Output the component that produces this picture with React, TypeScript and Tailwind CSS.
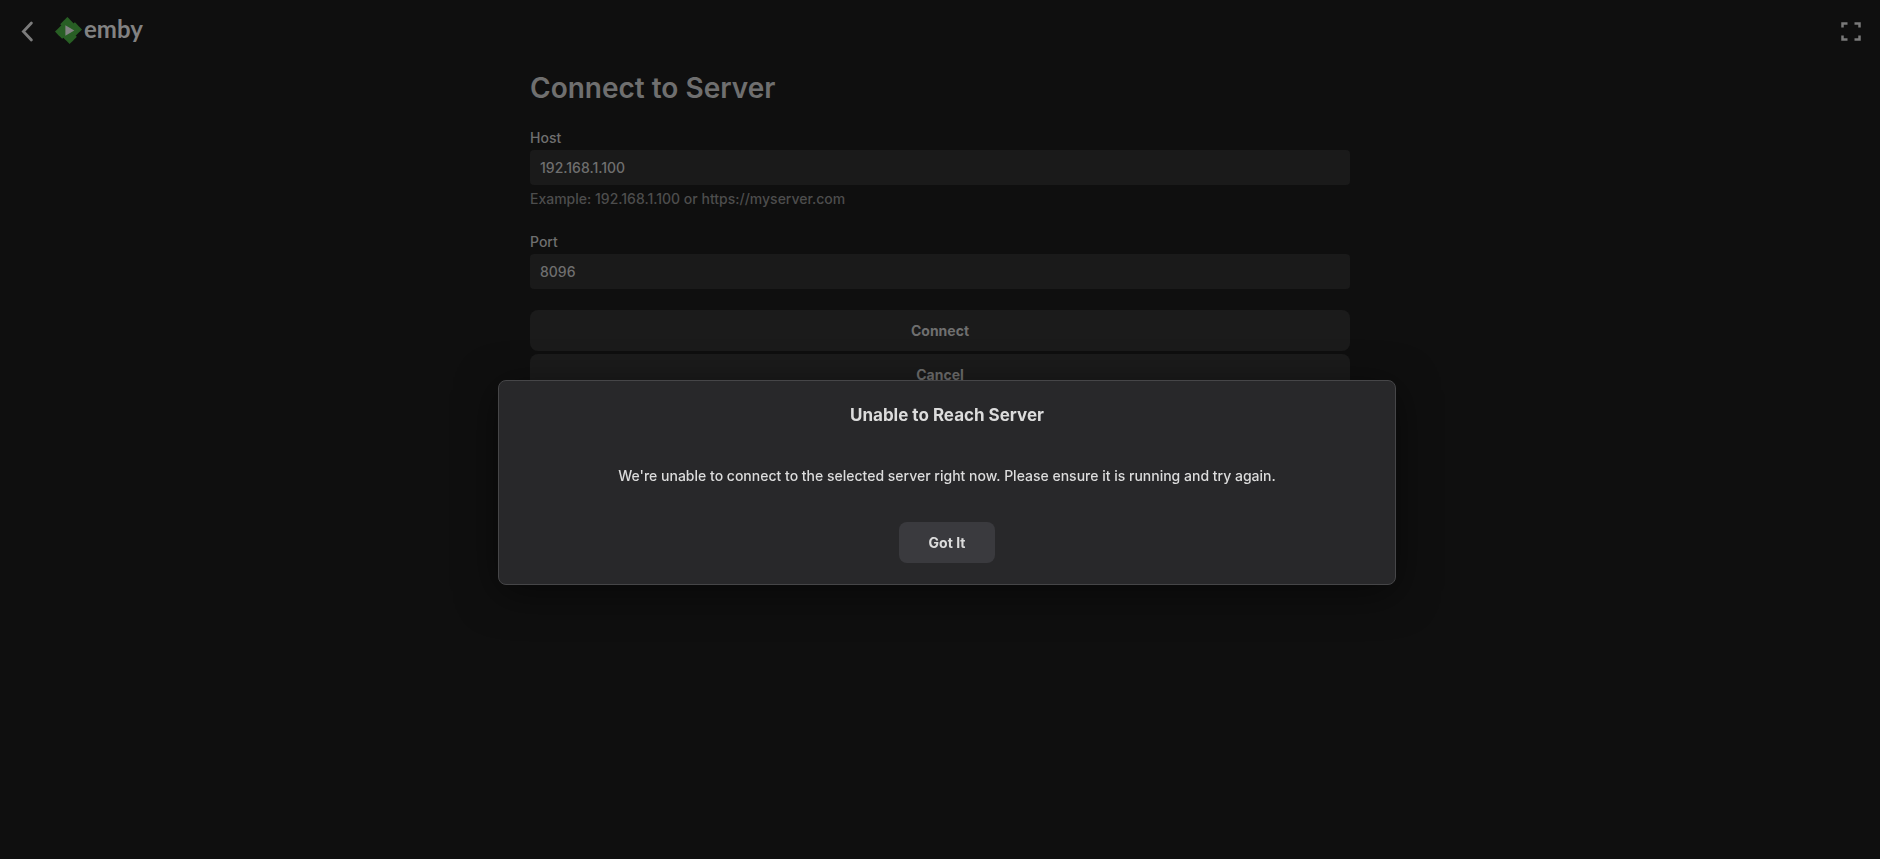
import { useState } from 'react';

function EmbyMark() {
  return (
    <svg viewBox="0 0 24 24" className="size-[27px] shrink-0" aria-hidden="true">
      <path
        fill="#285f24"
        d="M11.041 0c-.007 0-1.456 1.43-3.219 3.176L4.615 6.352l.512.513.512.512-2.819 2.791L0 12.961l1.83 1.848c1.006 1.016 2.438 2.46 3.182 3.209l1.351 1.359.508-.496c.28-.273.515-.498.524-.498.008 0 1.266 1.264 2.794 2.808L12.97 24l.187-.182c.23-.225 5.007-4.95 5.717-5.656l.52-.516-.502-.513c-.276-.282-.5-.52-.496-.53.003-.009 1.264-1.26 2.802-2.783 1.538-1.522 2.8-2.776 2.803-2.785.005-.012-3.617-3.684-6.107-6.193L17.65 4.6l-.505.505c-.279.278-.517.501-.53.497-.013-.005-1.27-1.267-2.793-2.805A449.655 449.655 0 0 0 11.041 0z"
      />
      <path fill="#838383" d="M9.2 7.367 17.18 12 9.2 16.621z" />
    </svg>
  );
}

function Header() {
  return (
    <header className="flex h-[61px] items-center justify-between px-4">
      <div className="flex items-center">
        <button type="button" aria-label="Back" className="flex h-10 w-[39px] items-center">
          <svg viewBox="0 0 24 24" className="size-6" fill="none" stroke="#7c7c7c" strokeWidth="2.8" strokeLinecap="round">
            <path d="M15.4 4 7.4 12.500l8 8.500" />
          </svg>
        </button>
        <a href="#" className="flex items-center gap-0.5">
          <EmbyMark />
          <span className="pb-1 font-['Lato',sans-serif] text-2xl leading-7 font-bold text-[#828282]">emby</span>
        </a>
      </div>
      <button type="button" aria-label="Fullscreen" className="flex h-10 items-center">
        <svg viewBox="0 0 24 24" className="size-6" fill="none" stroke="#7a7a7a" strokeWidth="2.5">
          <path d="M2.5 8.500V4.500H7.500M14.500 4.500H19.500V8.500M19.500 16.500v4H14.500M7.500 20.500H2.500V16.500" />
        </svg>
      </button>
    </header>
  );
}

export default function App() {
  const [host, setHost] = useState('192.168.1.100');
  const [port, setPort] = useState('8096');
  const [showError, setShowError] = useState(true);

  return (
    <div className="min-h-screen bg-[#0f0f0f] font-['Inter',sans-serif] text-sm leading-5 font-medium text-[#6f6f6f]">
      <Header />

      <main className="mx-auto w-full max-w-[820px]">
        <h1 className="mt-[9px] text-[28px] leading-9 font-semibold">Connect to Server</h1>

        <form className="mt-[22px]" onSubmit={(e) => e.preventDefault()}>
          <label htmlFor="host" className="block">Host</label>
          <input
            id="host"
            value={host}
            onChange={(e) => setHost(e.target.value)}
            className="mt-0.5 h-[35px] w-full rounded bg-[#1a1a1a] px-2.5 outline-none"
          />
          <p className="mt-1 text-[#4d4d4d]">Example: 192.168.1.100 or https://myserver.com</p>

          <label htmlFor="port" className="mt-[23px] block">Port</label>
          <input
            id="port"
            value={port}
            onChange={(e) => setPort(e.target.value)}
            className="mt-0.5 h-[35px] w-full rounded bg-[#1a1a1a] px-2.5 outline-none"
          />

          <div className="mt-[21px] flex flex-col gap-[3px]">
            <button type="submit" className="h-[41px] rounded-lg bg-[#1b1b1b] font-bold">Connect</button>
            <button type="button" className="h-[41px] rounded-lg bg-[#1b1b1b] font-bold">Cancel</button>
          </div>
        </form>
      </main>

      {showError && (
        <div className="fixed inset-0 flex justify-center pt-[380px] pl-3.5">
          <div
            role="alertdialog"
            aria-labelledby="error-title"
            aria-describedby="error-text"
            className="flex w-full max-w-[898px] flex-col items-center self-start rounded-lg border border-[#464648] bg-[#28282a] pt-[22px] pb-[21px] text-[#dcdcdc] shadow-[0_8px_40px_rgba(0,0,0,0.5)]"
          >
            <h2 id="error-title" className="text-[17px] leading-6 font-bold">Unable to Reach Server</h2>
            <p id="error-text" className="mt-[39px]">
              We're unable to connect to the selected server right now. Please ensure it is running and try again.
            </p>
            <button
              type="button"
              onClick={() => setShowError(false)}
              className="mt-9 h-[41px] w-24 rounded-lg bg-[#3a3a3e] font-bold"
            >
              Got It
            </button>
          </div>
        </div>
      )}
    </div>
  );
}
